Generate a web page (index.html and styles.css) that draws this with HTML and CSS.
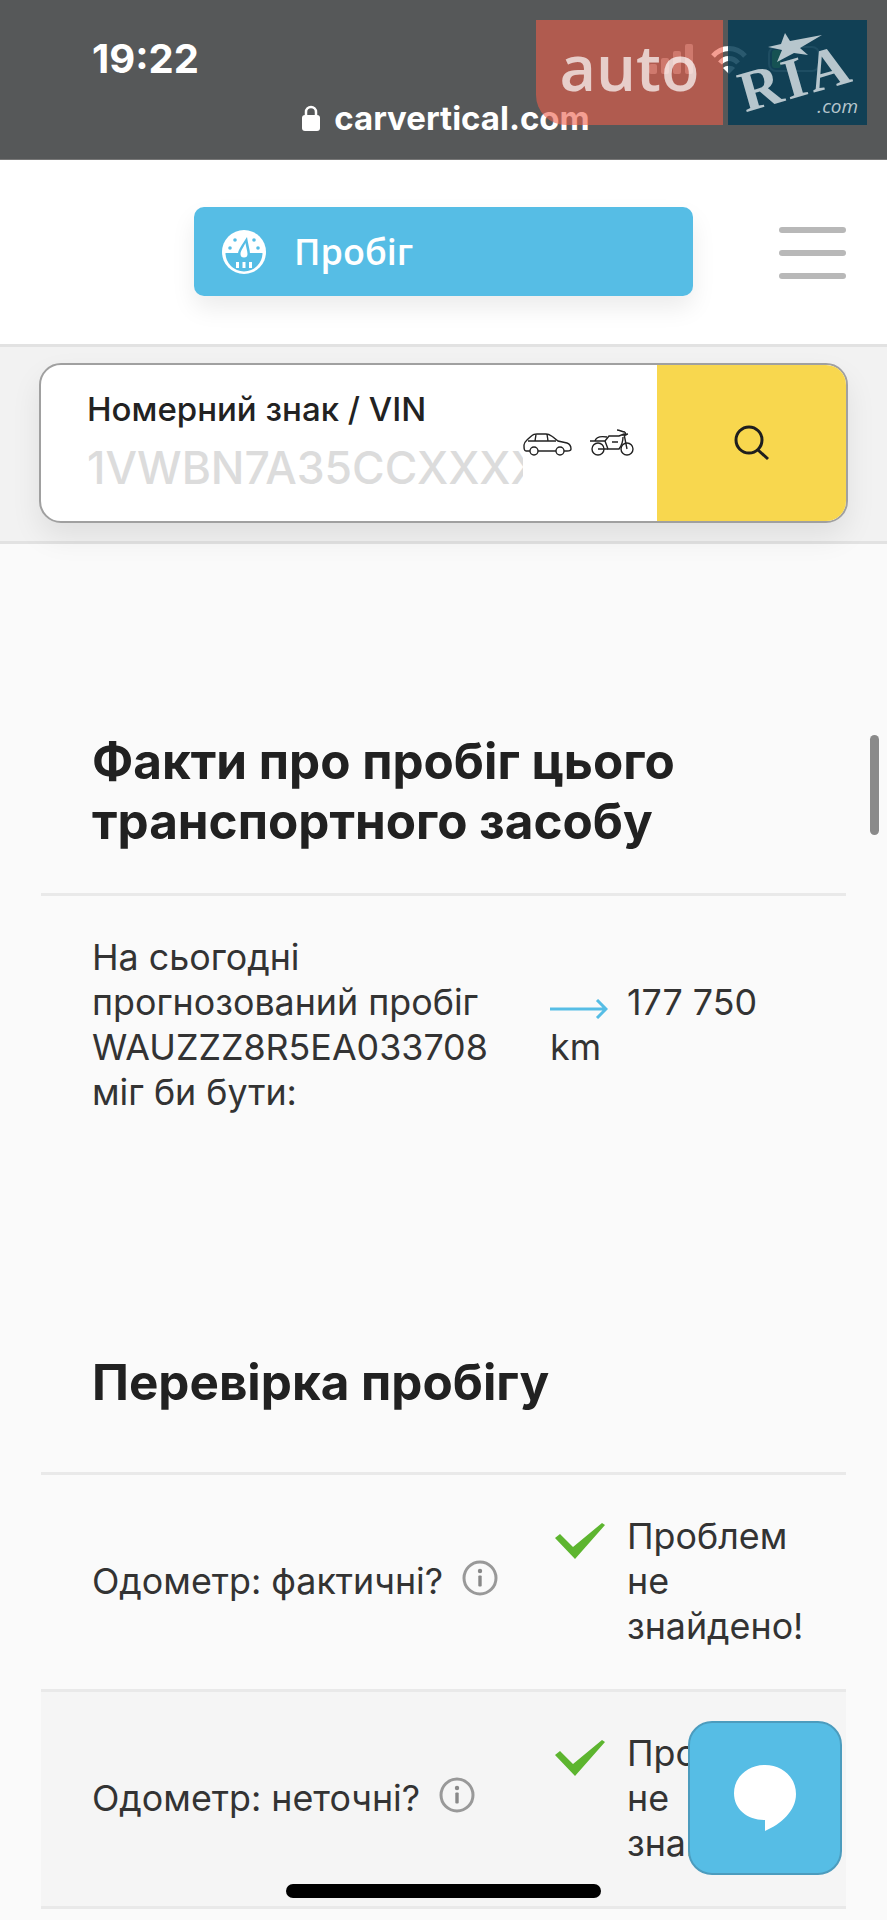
FILE: index.html
```html
<!DOCTYPE html>
<html>
  <head>
    <meta charset='utf-8'>
    <title>Пробіг</title>
    <link rel="stylesheet" href="styles.css">
  </head>
  <body>
    <div class='page'>
      <div class='status'>
        <div class='status_row'>
          <span class='time'>19:22</span>
          <div class='status_icons'>
            <svg class='signal' width='44' height='30' viewBox='0 0 44 30' fill='#fff'>
              <rect x='0' y='20' width='8' height='10' rx='2'/>
              <rect x='12' y='14' width='8' height='16' rx='2'/>
              <rect x='24' y='7' width='8' height='23' rx='2'/>
              <rect x='36' y='0' width='8' height='30' rx='2'/>
            </svg>
            <svg width='38' height='29' viewBox='0 0 38 29' fill='none' stroke='#fff' stroke-width='5'>
              <path d='M3 11C12 1 26 1 35 11'/>
              <path d='M10 18C15 12 23 12 28 18'/>
              <path d='M19 29L13 23C16 20 22 20 25 23Z' fill='#fff' stroke='none'/>
            </svg>
            <div class='battery'><div class='battery_fill'></div></div>
          </div>
        </div>
        <div class='url'>
          <svg width='18' height='26' viewBox='0 0 18 26'>
            <path d='M4 11V7a5 5 0 0 1 10 0v4' fill='none' stroke='#fff' stroke-width='2.5'/>
            <rect x='0' y='10' width='18' height='16' rx='3' fill='#fff'/>
          </svg>
          <span>carvertical.com</span>
        </div>
      </div>

      <div class='topbar'>
        <div class='section_pill'>
          <svg width='44' height='44' viewBox='0 0 44 44'>
            <circle cx='22' cy='22' r='22' fill='#fff'/>
            <path d='M3.5 23H40.500A18.500 18.500 0 0 1 3.500 23Z' fill='#56bde5'/>
            <path d='M25 7C26 14 28 20 28 24A6 6 0 1 1 16 24C16 20 20 15 25 7Z' fill='#56bde5'/>
            <path d='M23.500 13C24 17 25.500 21 25.500 24A3.500 3.500 0 1 1 18.500 24C18.500 21 21 18 23.500 13Z' fill='#fff'/>
            <circle cx='8' cy='18' r='1.800' fill='#56bde5'/>
            <circle cx='13' cy='10' r='1.800' fill='#56bde5'/>
            <circle cx='36' cy='18' r='1.800' fill='#56bde5'/>
            <circle cx='32' cy='10' r='1.800' fill='#56bde5'/>
            <rect x='14' y='32' width='3' height='6' fill='#fff'/>
            <rect x='20.500' y='32' width='3' height='6' fill='#fff'/>
            <rect x='27' y='32' width='3' height='6' fill='#fff'/>
          </svg>
          <span>Пробіг</span>
        </div>
        <div class='hamburger'><i></i><i></i><i></i></div>
      </div>

      <div class='search_strip'>
        <div class='search_box'>
          <div class='search_input'>
            <div class='search_label'>Номерний знак / VIN</div>
            <div class='search_placeholder'>1VWBN7A35CCXXXX</div>
          </div>
          <div class='vehicle_icons'>
            <svg width='49' height='23' viewBox='0 0 49 23' fill='none' stroke='#222' stroke-width='1.400'>
              <path d='M7 18H3C1 18 1 15 1 12C1 9 3 8 5 6L9 2.500C10 1.500 12 1 14 1H23C26 1 27 2 30 4L35 8L44 10C47 11 48 13 48 16C48 18 46 18 44 18H41'/>
              <path d='M15 18H33'/>
              <path d='M5 8H33M13 1.500L12 8M24 1L25 8'/>
              <circle cx='11' cy='18' r='4'/>
              <circle cx='37' cy='18' r='4'/>
            </svg>
            <svg width='46' height='27' viewBox='0 0 46 27' fill='none' stroke='#222' stroke-width='1.400'>
              <circle cx='9' cy='20' r='6'/>
              <circle cx='38' cy='20' r='6'/>
              <path d='M1 12H16L20 7H30L35 5L38 20'/>
              <path d='M6 12C7 8 12 7 18 8M16 12L19 20H30C33 16 34 12 34 8'/>
              <path d='M23 13H29M28 1C31 1 33 3 36 3M36 3L37 7M33 6L39 5'/>
              <path d='M9 20H19'/>
            </svg>
          </div>
          <div class='search_button'>
            <svg width='36' height='36' viewBox='0 0 36 36' fill='none' stroke='#1e1e1e' stroke-width='3'>
              <circle cx='15' cy='15' r='13'/>
              <path d='M24 25L34 34'/>
            </svg>
          </div>
        </div>
      </div>

      <div class='content'>
        <div class='card'>
          <h2 class='card_title'>Факти про пробіг цього транспортного засобу</h2>
          <div class='row'>
            <div>На сьогодні прогнозований пробіг WAUZZZ8R5EA033708 міг би бути:</div>
            <div class='row_value'>
              <svg class='arrow' width='58' height='20' viewBox='0 0 58 20' fill='none' stroke='#56bde5' stroke-width='3'>
                <path d='M0 10H56M47 1L56 10L47 19'/>
              </svg>177 750 km
            </div>
          </div>
        </div>

        <div class='card'>
          <h2 class='card_title'>Перевірка пробігу</h2>
          <div class='row'>
            <div class='row_label'>
              Одометр: фактичні?
              <svg class='info' width='36' height='36' viewBox='0 0 36 36'>
                <circle cx='18' cy='18' r='16' fill='none' stroke='#999' stroke-width='3'/>
                <circle cx='18' cy='11' r='2.200' fill='#888'/>
                <rect x='16.300' y='15.500' width='3.400' height='11' rx='1' fill='#888'/>
              </svg>
            </div>
            <div class='row_check'>
              <svg width='50' height='36' viewBox='0 0 50 36'><polygon points='0,15 5,11 18,24 47,0 50,2 20,36' fill='#5db52f'/></svg>
              <span>Проблем не знайдено!</span>
            </div>
          </div>
          <div class='row row_alt'>
            <div class='row_label'>
              Одометр: неточні?
              <svg class='info' width='36' height='36' viewBox='0 0 36 36'>
                <circle cx='18' cy='18' r='16' fill='none' stroke='#999' stroke-width='3'/>
                <circle cx='18' cy='11' r='2.200' fill='#888'/>
                <rect x='16.300' y='15.500' width='3.400' height='11' rx='1' fill='#888'/>
              </svg>
            </div>
            <div class='row_check'>
              <svg width='50' height='36' viewBox='0 0 50 36'><polygon points='0,15 5,11 18,24 47,0 50,2 20,36' fill='#5db52f'/></svg>
              <span>Проблем не знайдено!</span>
            </div>
          </div>
        </div>
      </div>

      <!-- things floating over the page -->
      <div class='ad_auto'>auto</div>
      <div class='ad_ria'>
        <svg class='ria_star' width='56' height='30' viewBox='0 0 56 30'>
          <polygon points='18,0 23,8 55,2 33,15 41,22 27,20 10,29 15,17 1,14 14,11' fill='#b7c6cd'/>
        </svg>
        <span class='ria_name'>RIA</span>
        <span class='ria_com'>.com</span>
      </div>
      <div class='scrollbar'></div>
      <div class='chat'>
        <svg width='62' height='66' viewBox='0 0 62 66'>
          <path d='M31 0C48 0 62 12 62 29C62 46 47 59 31 66V55C14 55 0 45 0 28C0 12 14 0 31 0Z' fill='#fff'/>
        </svg>
      </div>
      <div class='home_indicator'></div>
    </div>
  </body>
</html>
```

FILE: styles.css
```css
body {
  margin: 0;
  background: #fafafa;
  font-family: "Inter", "Noto Sans", sans-serif;
  color: #333;
}

.page {
  position: relative;
  width: 887px;
  height: 1920px;
  overflow: hidden;
}

/* phone status bar */
.status {
  height: 160px;
  box-sizing: border-box;
  background: #565859;
  border-bottom: 1px solid #777;
  padding: 37px 67px 0 92px;
  color: #fff;
}

.status_row {
  display: flex;
  justify-content: space-between;
  align-items: center;
  height: 44px;
}

.time {
  font-size: 40px;
  font-weight: 700;
  line-height: 44px;
}

.status_icons {
  display: flex;
  align-items: center;
  gap: 17px;
}

.signal {
  opacity: 0.45;
}

.battery {
  width: 52px;
  height: 26px;
  margin-left: 3px;
  box-sizing: border-box;
  padding: 2px;
  border: 2px solid rgba(255, 255, 255, 0.5);
  border-radius: 8px;
}

.battery_fill {
  width: 9px;
  height: 100%;
  background: #7cd14a;
  border-radius: 3px;
}

.url {
  display: flex;
  align-items: center;
  justify-content: center;
  gap: 14px;
  margin: 17px -67px 0 -92px;
  padding-left: 5px;
  font-size: 33px;
  font-weight: 700;
  line-height: 40px;
}

/* ads over the status bar */
.ad_auto {
  position: absolute;
  top: 20px;
  left: 536px;
  width: 187px;
  height: 105px;
  background: rgba(237, 93, 73, 0.6);
  border-bottom-left-radius: 30px;
  color: rgba(255, 255, 255, 0.7);
  font-family: "Open Sans", sans-serif;
  font-size: 63px;
  font-weight: 600;
  line-height: 94px;
  text-align: center;
}

.ad_ria {
  position: absolute;
  top: 20px;
  left: 728px;
  width: 139px;
  height: 105px;
  background: rgba(5, 60, 85, 0.85);
  overflow: hidden;
}

.ria_star {
  position: absolute;
  top: 13px;
  left: 39px;
}

.ria_name {
  position: absolute;
  top: 28px;
  left: 10px;
  color: #b7c6cd;
  font-family: "Liberation Serif", serif;
  font-size: 58px;
  font-weight: 700;
  letter-spacing: 3px;
  line-height: 60px;
  transform: rotate(-16deg);
}

.ria_com {
  position: absolute;
  right: 9px;
  bottom: 6px;
  color: #b7c6cd;
  font-family: "Open Sans", sans-serif;
  font-size: 19px;
  font-style: italic;
}

/* logo row */
.topbar {
  display: flex;
  align-items: flex-start;
  height: 184px;
  box-sizing: border-box;
  padding: 47px 0 0 194px;
  background: #fff;
}

.section_pill {
  display: flex;
  align-items: center;
  gap: 28px;
  width: 499px;
  height: 89px;
  box-sizing: border-box;
  padding-left: 28px;
  background: #56bde5;
  border-radius: 10px;
  box-shadow: 0 12px 24px rgba(0, 0, 0, 0.08);
  color: #fff;
  font-family: "Open Sans", sans-serif;
  font-size: 36px;
  font-weight: 600;
}

.hamburger {
  display: flex;
  flex-direction: column;
  gap: 17px;
  width: 67px;
  margin: 20px 0 0 86px;
}

.hamburger i {
  display: block;
  height: 6px;
  background: #b8b8b8;
  border-radius: 3px;
}

/* plate / vin search */
.search_strip {
  height: 200px;
  box-sizing: border-box;
  padding: 16px 39px 0;
  background: #f2f2f2;
  border-top: 3px solid #e2e2e2;
  border-bottom: 3px solid #e2e2e2;
}

.search_box {
  display: flex;
  height: 160px;
  box-sizing: border-box;
  background: #fff;
  border: 2px solid #a0a0a0;
  border-radius: 22px;
  overflow: hidden;
  box-shadow: 0 14px 30px rgba(0, 0, 0, 0.08);
}

.search_input {
  width: 482px;
  box-sizing: border-box;
  padding: 25px 0 0 46px;
  overflow: hidden;
  white-space: nowrap;
  flex-shrink: 0;
}

.search_label {
  color: #222;
  font-size: 33px;
  font-weight: 500;
  line-height: 38px;
}

.search_placeholder {
  margin-top: 13px;
  color: #dcdcdc;
  font-size: 44.500px;
  font-weight: 500;
  line-height: 54px;
}

.vehicle_icons {
  display: flex;
  align-items: flex-end;
  gap: 17px;
  flex: 1;
  padding-bottom: 65px;
}

.search_button {
  display: flex;
  align-items: center;
  justify-content: center;
  width: 189px;
  background: #f8d74e;
}

/* cards */
.content {
  padding: 145px 41px 0;
}

.card {
  margin-bottom: 136px;
}

.card_title {
  display: flex;
  align-items: center;
  min-height: 184px;
  box-sizing: border-box;
  margin: 0;
  padding: 42px 100px 42px 51px;
  border-bottom: 3px solid #e9e9e9;
  color: #212121;
  font-size: 49.400px;
  font-weight: 700;
  line-height: 60px;
}

.row {
  display: grid;
  grid-template-columns: 458px 262px;
  align-items: center;
  padding: 39px 0 40px 51px;
  border-bottom: 3px solid #e9e9e9;
  font-size: 35.800px;
  line-height: 45px;
}

.card:first-child .row {
  border-bottom: none;
}

.row > div:first-child {
  max-width: 410px;
}

.row_alt {
  background: #f5f5f5;
}

.arrow {
  margin-right: 19px;
  vertical-align: -4px;
}

.row_label {
  display: flex;
  align-items: center;
  gap: 19px;
  white-space: nowrap;
}

.info {
  margin-top: -8px;
}

.row_check {
  display: flex;
  gap: 22px;
  padding-left: 5px;
}

.row_check svg {
  flex-shrink: 0;
  margin-top: 9px;
}

.scrollbar {
  position: absolute;
  top: 735px;
  left: 870px;
  width: 9px;
  height: 100px;
  background: #8a8a8a;
  border-radius: 5px;
}

.chat {
  position: absolute;
  top: 1721px;
  left: 688px;
  display: flex;
  align-items: center;
  justify-content: center;
  width: 154px;
  height: 154px;
  box-sizing: border-box;
  background: #56bde5;
  border: 2px solid #4c9cbe;
  border-radius: 24px;
}

.home_indicator {
  position: absolute;
  top: 1884px;
  left: 286px;
  width: 315px;
  height: 14px;
  background: #000;
  border-radius: 7px;
}
```
